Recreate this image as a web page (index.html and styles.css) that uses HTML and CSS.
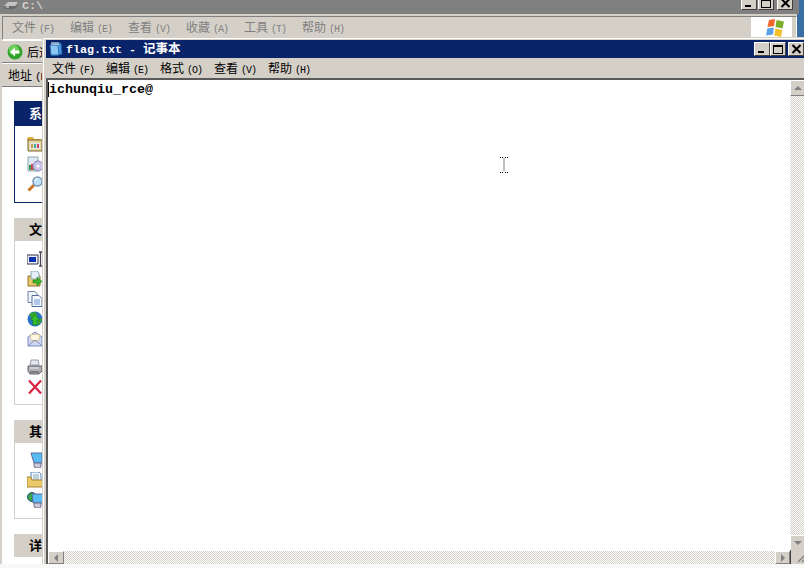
FILE: index.html
```html
<!DOCTYPE html>
<html lang="zh">
<head>
<meta charset="utf-8">
<title>flag.txt - 记事本</title>
<link rel="stylesheet" href="styles.css">
</head>
<body>
<div class="desktop">
  <div class="explorer">
    <div class="ex-title">
      <svg class="ex-drive" width="16" height="10" viewBox="0 0 16 10"><path d="M1 5 5 1h9l1 2-3 5H3z" fill="#c4c4c4"/><path d="M1 5h11l3-3v2l-3 4H2z" fill="#6a6a6a"/><path d="M3 6h3" stroke="#eee"/></svg>
      <span class="ex-title-text">C:\</span>
      <div class="ex-btns">
        <span class="btn"><i class="g-min"></i></span>
        <span class="btn"><i class="g-max"></i></span>
        <span class="btn btn-close"><svg width="11" height="10" viewBox="0 0 11 10"><path d="M1.5 1 9.5 9M9.5 1 1.5 9" stroke="#000" stroke-width="2"/></svg></span>
      </div>
    </div>
    <div class="ex-menu">
      <div class="ex-menu-items">
        <span class="mi">文件<b>(F)</b></span>
        <span class="mi">编辑<b>(E)</b></span>
        <span class="mi">查看<b>(V)</b></span>
        <span class="mi">收藏<b>(A)</b></span>
        <span class="mi">工具<b>(T)</b></span>
        <span class="mi">帮助<b>(H)</b></span>
      </div>
      <div class="logo">
        <svg width="20" height="20" viewBox="0 0 20 20"><path d="M4 2 10 1 9 8 2.500 9z" fill="#f0672a"/><path d="M11.500 2 19 3.500 17.500 10.500 10.500 9z" fill="#7db02a"/><path d="M2.300 10.500 8.800 9.600 8 16.500 1 17.500z" fill="#5aa0e6"/><path d="M10.300 10.500 17.300 12 16 19 9.300 17.500z" fill="#f3c02c"/></svg>
      </div>
    </div>
    <div class="ex-tool">
      <svg class="back" width="16" height="16" viewBox="0 0 16 16"><circle cx="8" cy="8" r="7.500" fill="#2fa32a"/><circle cx="7" cy="6" r="5" fill="#6fd05a"/><path d="M3 8 8 3.500V6.500H12.500V9.500H8V12.500z" fill="#fff"/></svg>
      <span class="tool-text">后退</span>
    </div>
    <div class="ex-addr"><span class="tool-text">地址<b>(D)</b></span></div>
    <div class="ex-body">
      <section class="panel panel-blue">
        <h3>系统任务</h3>
        <ul class="tasks">
          <li><svg width="16" height="16" viewBox="0 0 16 16"><path d="M0 3 1 1h5l1 2h7v2H0z" fill="#e0b040"/><path d="M1 4h14v11H1z" fill="#e8d8a0" stroke="#776633"/><path d="M3 7h10v6H3z" fill="#dfe8f0"/><path d="M4 8h2v4H4z" fill="#c94"/><path d="M7 8h2v4H7z" fill="#4a8"/><path d="M10 8h2v4h-2z" fill="#c46"/></svg></li>
          <li><svg width="16" height="16" viewBox="0 0 16 16"><path d="M1 1h10v14H1z" fill="#dfe8f5" stroke="#8aa"/><path d="M2 9h7v5H2z" fill="#3a9a5a"/><path d="M4 8h2v6H4z" fill="#d44"/><circle cx="11" cy="10" r="5" fill="#c8c4ea" stroke="#8884bb"/><circle cx="11" cy="10" r="1.500" fill="#fff"/></svg></li>
          <li><svg width="16" height="16" viewBox="0 0 16 16"><path d="M7 9 1.500 14.500" stroke="#c8752a" stroke-width="3"/><circle cx="10.500" cy="5.500" r="4.500" fill="#bfe3fa" stroke="#7a9ab8" stroke-width="1.500"/><path d="M8 5a3 3 0 0 1 3-2.500" stroke="#fff" fill="none"/></svg></li>
        </ul>
      </section>
      <section class="panel">
        <h3>文件和文件夹任务</h3>
        <ul class="tasks tasks-files">
          <li><svg width="16" height="16" viewBox="0 0 16 16"><path d="M0 4h11v9H0z" fill="#eef" stroke="#334"/><path d="M2 6h7v5H2z" fill="#0a2fb0"/><path d="M12 1h3M13.500 1v14M12 15h3" stroke="#445" stroke-width="1.300" fill="none"/></svg></li>
          <li><svg width="16" height="16" viewBox="0 0 16 16"><path d="M1 5h12v10H1z" fill="#e8c76a" stroke="#96702a"/><path d="M4 0h6l2 2v6H4z" fill="#e6eefa" stroke="#8aa"/><path d="M6 9h4V6l5 4.500-5 4.500v-3H6z" fill="#3cb52c" stroke="#1b7a1a" stroke-width=".6"/></svg></li>
          <li><svg width="16" height="16" viewBox="0 0 16 16"><path d="M1 .5h7l2 2v9H1z" fill="#eef3fb" stroke="#6f83a6"/><path d="M5 4.500h7l3 3v8H5z" fill="#f6f9ff" stroke="#56709e"/><path d="M7 9h6M7 11h6M7 13h6" stroke="#6f93d6"/></svg></li>
          <li><svg width="16" height="16" viewBox="0 0 16 16"><circle cx="8" cy="8" r="7.500" fill="#2a72c8"/><path d="M3 2 8 1l3 3-4 3-4-1zM10 9l4-2 1 2-3 5-2-2z" fill="#35a52d"/><path d="M8 3.500 12.500 9H10v5H6V9H3.500z" fill="#38c02e" stroke="#157a18" stroke-width=".6"/></svg></li>
          <li><svg width="16" height="16" viewBox="0 0 16 16"><path d="M1 6 8 1l7 5v9H1z" fill="#cfd8f3" stroke="#7f8cc0"/><path d="M3.500 3.500h9V8L8 11 3.500 8z" fill="#fff7df" stroke="#d0b070" stroke-width=".6"/><path d="M1 15 7 9.500h2L15 15" stroke="#7f8cc0" fill="none"/></svg></li>
          <li class="gap-before"><svg width="16" height="16" viewBox="0 0 16 16"><path d="M4 1h7l1 5H3z" fill="#e5e8f0" stroke="#99a"/><path d="M1 7h14v5l-3 3H3l-2-3z" fill="#aeb0b5" stroke="#5f6066"/><path d="M3 9h9" stroke="#eee"/><path d="M3 13h9" stroke="#444"/></svg></li>
          <li><svg width="16" height="16" viewBox="0 0 16 16"><path d="M2 1.500 14 14.500M14 1.500 2 14.500" stroke="#d8213f" stroke-width="2.200"/></svg></li>
        </ul>
      </section>
      <section class="panel">
        <h3>其它位置</h3>
        <ul class="tasks tasks-other">
          <li><svg width="16" height="16" viewBox="0 0 16 16"><path d="M4 1h11v10H7z" fill="#58bdf5" stroke="#5d6a9c"/><path d="M7 11h7v3l-1 2H8l-1-2z" fill="#c8c8d8" stroke="#6a6a8a"/></svg></li>
          <li><svg width="16" height="16" viewBox="0 0 16 16"><path d="M4 0h8l2 2v7H4z" fill="#f4f8ff" stroke="#5c86c0"/><path d="M6 3h6M6 5h6M6 7h6" stroke="#8ab"/><path d="M0 5h4l1 3h11v7H0z" fill="#ebc968" stroke="#a88432"/></svg></li>
          <li><svg width="16" height="16" viewBox="0 0 16 16"><circle cx="5" cy="5" r="4.500" fill="#3ca640" stroke="#1b4f8a"/><path d="M5 2h11v9H6z" fill="#58bdf5" stroke="#5d6a9c"/><path d="M7 11h7v3l-1 2H8l-1-2z" fill="#c8c8d8" stroke="#6a6a8a"/></svg></li>
        </ul>
      </section>
      <section class="panel panel-last">
        <h3>详细信息</h3>
      </section>
    </div>
  </div>

  <div class="notepad">
    <div class="np-title">
      <svg class="np-icon" width="14" height="15" viewBox="0 0 14 15"><path d="M3 1h9l1 11-10 2z" fill="#4f9be0" stroke="#1d5aa0"/><path d="M1 3h8l1 10H2z" fill="#8cc6f2" stroke="#2a6fb5"/><path d="M3 0v3M5 0v3M7 0v3M9 0v3" stroke="#eee"/></svg>
      <span class="np-title-text">flag.txt - <em>记事本</em></span>
      <div class="np-btns">
        <span class="btn"><i class="g-min"></i></span>
        <span class="btn"><i class="g-max"></i></span>
        <span class="btn btn-close"><svg width="11" height="10" viewBox="0 0 11 10"><path d="M1.5 1 9.500 9M9.500 1 1.500 9" stroke="#000" stroke-width="2"/></svg></span>
      </div>
    </div>
    <div class="np-menu">
      <span class="nmi">文件<b>(F)</b></span>
      <span class="nmi">编辑<b>(E)</b></span>
      <span class="nmi">格式<b>(O)</b></span>
      <span class="nmi">查看<b>(V)</b></span>
      <span class="nmi">帮助<b>(H)</b></span>
    </div>
    <div class="np-client">
      <div class="np-row">
        <div class="np-edit"><span class="caret"></span>ichunqiu_rce@</div>
        <div class="vbar">
          <span class="sb-btn"><i class="arr-up"></i></span>
          <span class="track"></span>
          <span class="sb-btn"><i class="arr-down"></i></span>
        </div>
      </div>
      <div class="hbar">
        <span class="sb-btn"><i class="arr-left"></i></span>
        <span class="track"></span>
        <span class="sb-btn"><i class="arr-right"></i></span>
        <span class="grip"><svg width="16" height="13" viewBox="0 0 16 13"><path d="M15 5 8 12M15 9 12 12" stroke="#808080" stroke-width="1.400"/></svg></span>
      </div>
    </div>
  </div>

  <svg class="ibeam" width="8" height="16" viewBox="0 0 8 16"><path d="M0 .5h3M5 .5h3M4 1.500V14M0 15.500h3M5 15.500h3" stroke="#000" stroke-dasharray="1 1" fill="none"/></svg>
</div>
</body>
</html>
```
FILE: styles.css
```css
* { box-sizing: border-box; }
html, body { margin: 0; padding: 0; background: #fdfdfd; }
ul { list-style: none; margin: 0; padding: 0; }
h3 { margin: 0; }

.desktop {
  position: relative;
  width: 804px;
  height: 568px;
  overflow: hidden;
  background: #f8f8f8;
  font-family: "Noto Sans CJK SC", "Liberation Sans", sans-serif;
  font-size: 12px;
}

/* background explorer window */
.explorer {
  position: absolute;
  left: 0;
  top: -4px;
  width: 804px;
  height: 568px;
  display: flex;
  flex-direction: column;
  background: #d4d0c8;
  border-left: 2px solid #d4d0c8;
  border-right: 7px solid #3a6ea5;
}
.ex-title {
  height: 18px;
  flex: none;
  margin: 0 -2px;
  padding-left: 3px;
  background: #808080;
  display: flex;
  align-items: flex-end;
  position: relative;
}
.ex-drive { margin-bottom: 3px; }
.ex-title-text {
  margin: 0 0 1px 3px;
  font: bold 11.7px/14px "Liberation Mono", monospace;
  color: #d4d0c8;
}
.ex-btns {
  margin-left: auto;
  margin-right: 6px;
  display: flex;
  gap: 1px;
  height: 15px;
  align-self: flex-start;
}
.ex-btns .btn-close { margin-left: 2px; }
.btn {
  width: 16px;
  height: 14px;
  background: #d4d0c8;
  border: 1px solid;
  border-color: #fff #404040 #404040 #fff;
  display: flex;
  align-items: center;
  justify-content: center;
  position: relative;
}
.g-min { position: absolute; left: 3px; bottom: 2px; width: 6px; height: 2px; background: #000; }
.g-max { width: 10px; height: 9px; border: 1px solid #000; border-top-width: 2px; }

.ex-menu {
  height: 24px;
  flex: none;
  margin-top: 2px;
  background: #d4d0c8;
  border: 1px solid;
  border-color: #808080 #fff #fff #808080;
  display: flex;
  align-items: center;
  justify-content: space-between;
}
.ex-menu-items { display: flex; padding-left: 9px; color: #808080; margin-top: -2px; }
.mi { width: 58px; line-height: 18px; }
.mi b, .nmi b, .tool-text b { font: 10px "Liberation Mono", monospace; margin-left: 3px; letter-spacing: -1px; }
.logo {
  width: 41px;
  height: 22px;
  margin-right: 4px;
  padding-left: 6px;
  background: #fff;
  display: flex;
  align-items: center;
  justify-content: center;
}
.ex-tool {
  height: 23px;
  flex: none;
  display: flex;
  align-items: center;
  padding: 1px 0 0 5px;
  border-top: 1px solid #fff;
  border-bottom: 1px solid #808080;
}
.tool-text { color: #000; line-height: 18px; }
.back { margin-right: 4px; }
.ex-addr {
  height: 23px;
  flex: none;
  display: flex;
  align-items: center;
  padding-left: 6px;
  border-top: 1px solid #fff;
}
.ex-addr b { font-size: 11px; }

.ex-body {
  flex: 1;
  background: #fff;
  padding: 14px 0 0 12px;
  border-top: 1px solid #808080;
  display: flex;
  flex-direction: column;
  gap: 15px;
  overflow: hidden;
}
.panel {
  width: 200px;
  border: 1px solid #d4d0c8;
  border-top: 0;
  flex: none;
}
.panel h3 {
  height: 23px;
  margin: 0 -1px;
  padding-left: 15px;
  background: #d4d0c8;
  font: bold 13px/22px "Noto Sans CJK SC", sans-serif;
  color: #000;
}
.panel-blue { border-color: #0a246a; }
.panel-blue h3 { height: 25px; line-height: 24px; background: #0a246a; color: #fff; }
.panel-last { border: 0; height: 22px; }
.panel-last h3 { margin: 0; padding-left: 15px; }
.tasks { padding: 10px 0 6px 12px; }
.tasks-files { padding-bottom: 5px; }
.tasks li { height: 20px; }
.tasks svg { display: block; }
.tasks .gap-before { margin-top: 8px; }
.tasks-other { padding-top: 9px; }

/* notepad */
.notepad {
  position: absolute;
  left: 42px;
  top: 37px;
  width: 764px;
  height: 527px;
  display: flex;
  flex-direction: column;
  background: #d4d0c8;
  border-left: 1px solid #d4d0c8;
  border-top: 1px solid #d4d0c8;
  box-shadow: inset 1px 1px 0 #fff;
  padding: 2px 0 0 4px;
}
.np-title {
  height: 18px;
  flex: none;
  margin-left: -1px;
  padding-left: 3px;
  background: #0a246a;
  display: flex;
  align-items: center;
  color: #fff;
}
.np-icon { margin-right: 3px; }
.np-title-text {
  font: bold 11.67px/18px "Liberation Mono", monospace;
  white-space: pre;
}
.np-title-text em { font: bold 12.5px/18px "Noto Sans CJK SC", sans-serif; }
.np-btns {
  margin-left: auto;
  margin-right: 2px;
  display: flex;
  gap: 0;
}
.np-btns .btn-close { margin-left: 2px; }
.np-menu {
  height: 20px;
  flex: none;
  display: flex;
  align-items: flex-start;
  padding-left: 5px;
  padding-top: 1px;
}
.nmi { width: 54px; line-height: 18px; color: #000; }
.np-client {
  flex: 1;
  min-height: 0;
  display: flex;
  flex-direction: column;
  border-top: 2px solid #5a5a5a;
  border-left: 2px solid #5a5a5a;
  margin-left: -1px;
}
.np-row { flex: 1; min-height: 0; display: flex; }
.np-edit {
  flex: 1;
  background: #fff;
  position: relative;
  padding: 2px 0 0 1px;
  font: bold 13.33px/15px "Liberation Mono", monospace;
  color: #000;
}
.caret { position: absolute; left: 0; top: 2px; width: 1px; height: 15px; background: #000; }
.vbar { width: 16px; flex: none; display: flex; flex-direction: column; }
.hbar { height: 13px; flex: none; display: flex; background: #d4d0c8; }
.track {
  flex: 1;
  background-color: #fff;
  background-image: conic-gradient(#d4d0c8 25%, #fff 0 50%, #d4d0c8 0 75%, #fff 0);
  background-size: 2px 2px;
}
.sb-btn {
  flex: none;
  background: #d4d0c8;
  border: 1px solid;
  border-color: #fff #808080 #808080 #fff;
  display: flex;
  align-items: center;
  justify-content: center;
}
.vbar .sb-btn { height: 16px; }
.hbar .sb-btn { width: 16px; }
.hbar .sb-btn:nth-child(3) { width: 15px; }
.arr-up { width: 0; height: 0; border: 4px solid transparent; border-top: 0; border-bottom: 4px solid #808080; }
.arr-down { width: 0; height: 0; border: 4px solid transparent; border-bottom: 0; border-top: 4px solid #808080; }
.arr-left { width: 0; height: 0; border: 4px solid transparent; border-left: 0; border-right: 4px solid #808080; }
.arr-right { width: 0; height: 0; border: 4px solid transparent; border-right: 0; border-left: 4px solid #808080; }
.grip { width: 16px; flex: none; background: #d4d0c8; border-left: 1px solid #404040; margin-top: -1px; }
.grip svg { display: block; margin-left: -1px; }

.ibeam { position: absolute; left: 500px; top: 157px; }
```
